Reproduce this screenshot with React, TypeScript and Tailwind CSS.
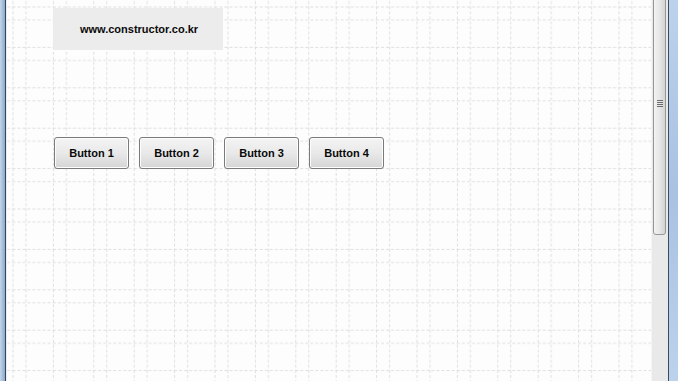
const buttons = ["Button 1", "Button 2", "Button 3", "Button 4"];

function GridBackdrop() {
  // dashed double-line designer grid
  return (
    <svg className="absolute inset-0 h-full w-full" aria-hidden="true">
      <defs>
        <pattern id="grid" x="5.5" y="6.5" width="40.4" height="40.4" patternUnits="userSpaceOnUse">
          <g stroke="#dfdfdf" strokeWidth="1" strokeDasharray="3 2">
            <line x1="0.5" y1="0" x2="0.5" y2="40.4" />
            <line x1="13.5" y1="0" x2="13.5" y2="40.4" />
            <line x1="0" y1="0.5" x2="40.4" y2="0.5" />
            <line x1="0" y1="13.5" x2="40.4" y2="13.5" />
          </g>
        </pattern>
      </defs>
      <rect width="100%" height="100%" fill="url(#grid)" />
    </svg>
  );
}

export default function App() {
  return (
    <div className="flex h-[381px] w-[678px] overflow-hidden bg-white font-['Liberation_Sans',Arial,sans-serif]">
      {/* left frame */}
      <div className="w-[5px] bg-gradient-to-r from-[#c4d5ea] to-[#8ea9cc]" />
      <div className="w-px bg-[#34455c]" />
      <div className="w-px bg-[#e9eef4]" />

      {/* canvas */}
      <div className="relative flex-1 bg-[#fdfdfd]">
        <GridBackdrop />
        <div className="relative flex flex-col">
          <div className="ml-[46px] mt-[8px] flex h-[42px] w-[170px] items-center justify-center bg-[#ececec] pl-[2px] pt-[1px] text-[11px] font-bold text-[#0a0a0a]">
            www.constructor.co.kr
          </div>
          <div className="ml-[47px] mt-[87px] flex gap-[10px]">
            {buttons.map((b) => (
              <button
                key={b}
                className="flex h-[32px] w-[75px] items-center justify-center rounded-[3px] border border-[#7a7a7a] bg-gradient-to-b from-[#f4f4f4] via-[#e9e9e9] to-[#d5d5d5] text-[11px] font-bold text-[#0a0a0a] shadow-[inset_0_0_0_1px_#fcfcfc]"
              >
                {b}
              </button>
            ))}
          </div>
        </div>
      </div>

      {/* scrollbar */}
      <div className="relative w-[17px] border-l border-[#f5f5f5] bg-[#e9e9e9]">
        <div className="absolute left-[1px] top-[-4px] flex h-[239px] w-[13px] items-center justify-center rounded-[3px] border border-[#979797] bg-gradient-to-r from-[#f3f3f3] via-[#e6e6e6] to-[#d3d3d3]">
          <div className="mt-[-24px] flex flex-col gap-[1px]">
            <div className="h-px w-[6px] bg-[#6c6c6c]" />
            <div className="h-px w-[6px] bg-[#6c6c6c]" />
            <div className="h-px w-[6px] bg-[#6c6c6c]" />
            <div className="h-px w-[6px] bg-[#6c6c6c]" />
          </div>
        </div>
      </div>

      {/* right frame */}
      <div className="w-px bg-[#3a4b61]" />
      <div className="w-[9px] bg-gradient-to-b from-[#bcd2ec] via-[#a9c2e2] to-[#bcd2ec]" />
    </div>
  );
}
